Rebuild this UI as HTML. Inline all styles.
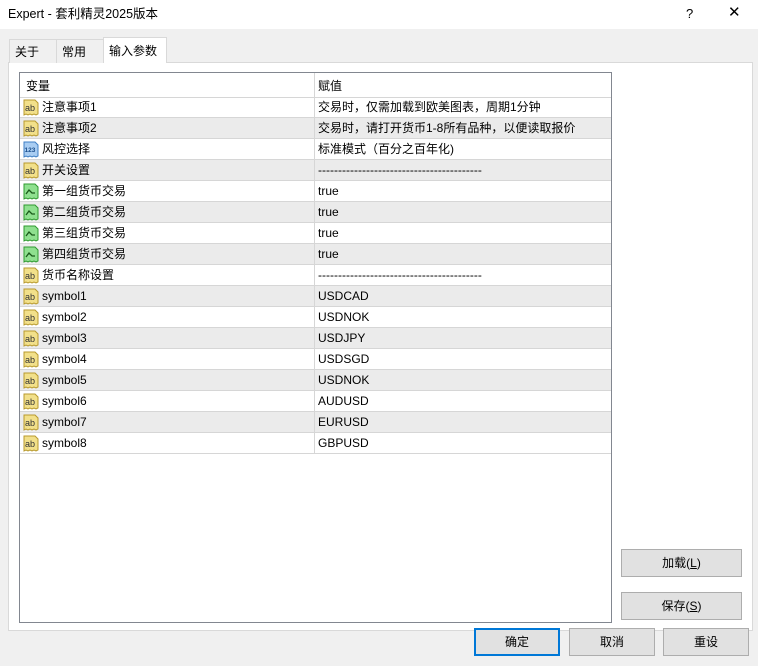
<!DOCTYPE html>
<html><head><meta charset="utf-8"><style>
*{box-sizing:border-box;margin:0;padding:0}
body{width:758px;height:666px;background:#f0f0f0;font-family:"Liberation Sans","Noto Sans CJK SC",sans-serif;font-size:12px;line-height:15px;color:#000;position:relative;overflow:hidden}
.title{position:absolute;left:0;top:0;width:758px;height:29px;background:#fff}
.title .t{position:absolute;left:8px;top:7px;font-size:12.5px}
.title .q{position:absolute;left:686px;top:6px;font-size:13px}
.title .x{position:absolute;left:728px;top:5px;font-size:15px;font-weight:normal}
.tab{position:absolute;top:39px;height:24px;border:1px solid #d9d9d9;border-bottom:none;background:#f0f0f0;padding:5px 5px 0}
.tab.a{top:37px;height:26px;background:#fff;border-color:#d9d9d9;padding-top:6px}
.panel{position:absolute;left:8px;top:62px;width:745px;height:569px;background:#fff;border:1px solid #d9d9d9}
.list{position:absolute;left:19px;top:72px;width:593px;height:551px;background:#fff;border:1px solid #828790}
.row{position:absolute;left:0;width:591px;height:21px;border-bottom:1px solid #d6d6d6}
.row.g{background:#ebebeb}
.row span{line-height:15px;display:block;white-space:nowrap}
.row .n{position:absolute;left:22px;top:3px}
.row .v{position:absolute;left:298px;top:3px}
.row .d{position:absolute;left:294px;top:0;width:1px;height:21px;background:#d6d6d6}
.row svg{position:absolute;left:3px;top:2px}
.btn{position:absolute;width:121px;height:28px;background:#e1e1e1;border:1px solid #adadad;text-align:center;line-height:26px;font-size:12px}
.btn.s{width:86px}
.btn.f{border:2px solid #0078d7;line-height:24px}
</style></head><body>
<div class="title"><span class="t">Expert - 套利精灵2025版本</span><span class="q">?</span><span class="x">✕</span></div>
<div class="panel"></div>
<div class="tab" style="left:9px;width:48px">关于</div>
<div class="tab" style="left:56px;width:48px">常用</div>
<div class="tab a" style="left:103px;width:64px">输入参数</div>
<div class="list">
<div class="row" style="top:0;height:25px"><span class="n" style="left:6px;top:6px">变量</span><span class="d" style="height:25px"></span><span class="v" style="top:6px">赋值</span></div>
</div>
<div id="rows" style="position:absolute;left:20px;top:97px"></div>
<div class="btn" style="left:621px;top:549px">加载(<u>L</u>)</div>
<div class="btn" style="left:621px;top:592px">保存(<u>S</u>)</div>
<div class="btn s f" style="left:474px;top:628px">确定</div>
<div class="btn s" style="left:569px;top:628px">取消</div>
<div class="btn s" style="left:663px;top:628px">重设</div>
<script>
var ab='<svg width="16" height="17" viewBox="0 0 16 17"><path d="M1 1H12L15 4V15L13 16L11 15L9 16L7 15L5 16L3 15L1 16Z" fill="#f2e08a" stroke="#b89a2e"/><text x="2" y="12" font-size="9" font-family="Liberation Sans" fill="#333">ab</text></svg>';
var n123='<svg width="16" height="17" viewBox="0 0 16 17"><path d="M1 1H12L15 4V15L13 16L11 15L9 16L7 15L5 16L3 15L1 16Z" fill="#a9cdf2" stroke="#3f7fc4"/><text x="1.5" y="11" font-size="6.5" font-weight="bold" font-family="Liberation Sans" fill="#1c4f8c">123</text></svg>';
var gr='<svg width="16" height="17" viewBox="0 0 16 17"><path d="M1 1H12L15 4V15L13 16L11 15L9 16L7 15L5 16L3 15L1 16Z" fill="#8fe08f" stroke="#2f9a2f"/><path d="M3 11L6 7L9 10L12 10" fill="none" stroke="#1a5a1a" stroke-width="1.3"/></svg>';
var d='-----------------------------------------';
var R=[[ab,'注意事项1','交易时，仅需加载到欧美图表，周期1分钟'],[ab,'注意事项2','交易时，请打开货币1-8所有品种，以便读取报价'],[n123,'风控选择','标准模式（百分之百年化)'],[ab,'开关设置',d],[gr,'第一组货币交易','true'],[gr,'第二组货币交易','true'],[gr,'第三组货币交易','true'],[gr,'第四组货币交易','true'],[ab,'货币名称设置',d],[ab,'symbol1','USDCAD'],[ab,'symbol2','USDNOK'],[ab,'symbol3','USDJPY'],[ab,'symbol4','USDSGD'],[ab,'symbol5','USDNOK'],[ab,'symbol6','AUDUSD'],[ab,'symbol7','EURUSD'],[ab,'symbol8','GBPUSD']];
var h='';R.forEach(function(r,i){h+='<div class="row'+(i%2?' g':'')+'" style="top:'+(i*21)+'px">'+r[0]+'<span class="n">'+r[1]+'</span><span class="d"></span><span class="v">'+r[2]+'</span></div>';});
document.getElementById('rows').innerHTML=h;
</script>
</body></html>
